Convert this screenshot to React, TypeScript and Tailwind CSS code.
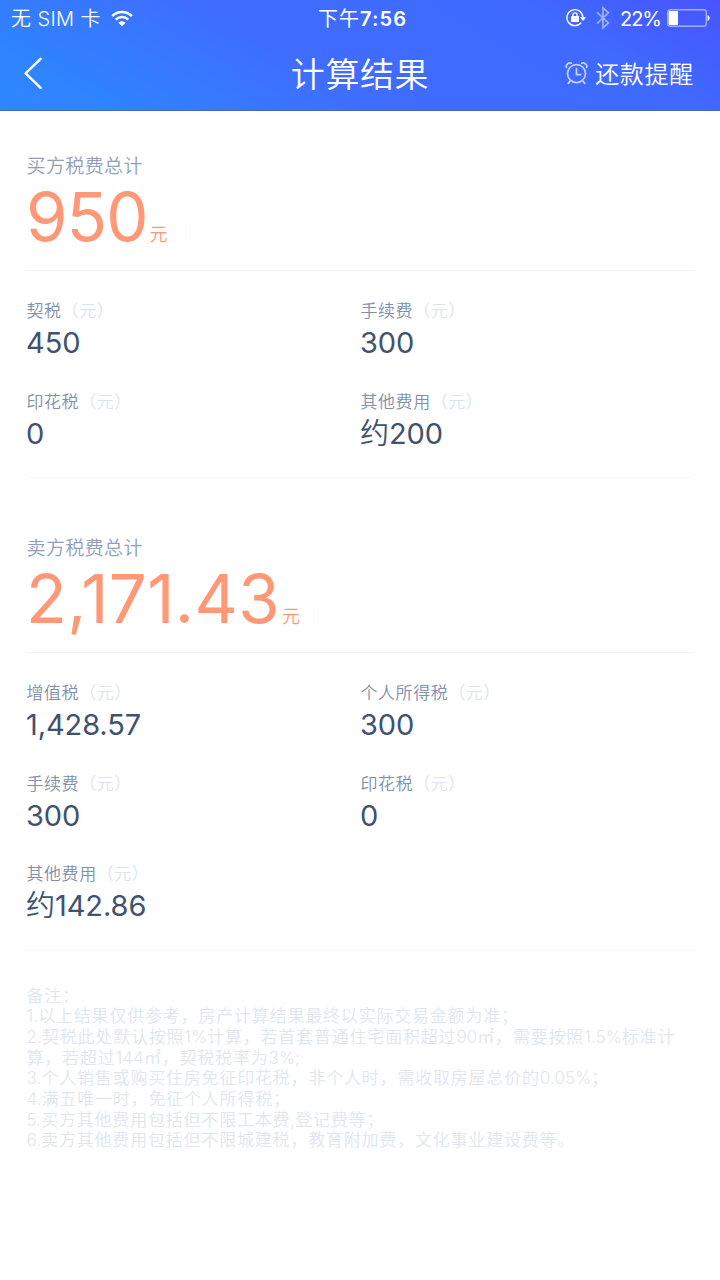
import clsx from "clsx";

type Fee = { label: string; value: string };

const buyerFees: Fee[] = [
  { label: "契税", value: "450" },
  { label: "手续费", value: "300" },
  { label: "印花税", value: "0" },
  { label: "其他费用", value: "约200" },
];

const sellerFees: Fee[] = [
  { label: "增值税", value: "1,428.57" },
  { label: "个人所得税", value: "300" },
  { label: "手续费", value: "300" },
  { label: "印花税", value: "0" },
  { label: "其他费用", value: "约142.86" },
];

const notes = [
  "备注：",
  "1.以上结果仅供参考，房产计算结果最终以实际交易金额为准；",
  "2.契税此处默认按照1%计算，若首套普通住宅面积超过90㎡，需要按照1.5%标准计",
  "算，若超过144㎡，契税税率为3%;",
  "3.个人销售或购买住房免征印花税，非个人时，需收取房屋总价的0.05%；",
  "4.满五唯一时，免征个人所得税；",
  "5.买方其他费用包括但不限工本费,登记费等；",
  "6.卖方其他费用包括但不限城建税，教育附加费，文化事业建设费等。",
];

function WifiIcon() {
  return (
    <svg className="h-[17px] w-[22px]" viewBox="0 0 22 17" fill="none" stroke="white" strokeWidth="2.5">
      <path d="M1.2 6.1C6.7.7 15.3.7 20.8 6.1" />
      <path d="M4.7 9.6c3.6-3.5 9-3.5 12.6 0" />
      <path d="M11 16.2 7.4 12.7c2-2 5.2-2 7.2 0z" fill="white" stroke="none" />
    </svg>
  );
}

function RotationLockIcon() {
  return (
    <svg className="h-5 w-5" viewBox="0 0 20 20" fill="none" stroke="white">
      <path d="M15.2 14.6A8 8 0 1 1 16.9 9.5" strokeWidth="1.4" />
      <path d="M14 9.3h6L17 12.9z" fill="white" stroke="none" />
      <rect x="5" y="8" width="8" height="6" rx=".5" fill="white" stroke="none" />
      <path d="M6.9 8.6V7a2.1 2.1 0 0 1 4.2 0v1.6" strokeWidth="1.4" />
    </svg>
  );
}

function BluetoothIcon() {
  return (
    <svg className="h-6 w-[14px]" viewBox="0 0 14 24" fill="none" stroke="white" strokeOpacity=".5" strokeWidth="1.7">
      <path d="M1 6.4 12.4 17 7 21.8V1.8l5.4 5L1 17.6" />
    </svg>
  );
}

function BatteryIcon() {
  return (
    <svg className="h-[18px] w-[43px]" viewBox="0 0 43 18" fill="none">
      <rect x=".7" y=".7" width="38.6" height="16.6" rx="2.6" stroke="white" strokeOpacity=".5" strokeWidth="1.4" />
      <path d="M1.6 3.2Q1.6 2 2.8 2H11v14H2.8q-1.2 0-1.2-1.2z" fill="white" />
      <path d="M40.6 6c2.6.8 2.6 5.2 0 6z" fill="white" />
    </svg>
  );
}

function AlarmIcon() {
  return (
    <svg className="h-6 w-6" viewBox="0 0 24 24" fill="none" stroke="white" strokeOpacity=".7" strokeWidth="1.7" strokeLinecap="round">
      <circle cx="11.5" cy="12.6" r="9" />
      <path d="M11.5 7.6v6h4.2M1.3 6.4c-.6-2.8 2.2-5.2 5-4.2M21.7 6.4c.6-2.8-2.2-5.2-5-4.2M4.9 20.4 3.3 22.4M18.1 20.4l1.6 2" />
    </svg>
  );
}

function Header() {
  return (
    <header className="h-[111px] border-b border-[#4468b8] bg-[linear-gradient(30deg,#2e87ff_0%,#2f84ff_12%,#3f6dff_42%,#3f69ff_78%,#4854ff_100%)] text-white">
      <div className="grid h-9 grid-cols-3 items-center pl-[11px] pr-[10px]">
        <div className="flex items-center gap-[10px] text-[20px]">
          <span className="pt-px font-[350] tracking-[0.4px]">无 SIM 卡</span>
          <WifiIcon />
        </div>
        <div className="pl-1 pt-px text-center text-[20px] tracking-[1.1px]">
          下午<span className="font-semibold">7:56</span>
        </div>
        <div className="flex items-center justify-end">
          <RotationLockIcon />
          <span className="ml-[10px]">
            <BluetoothIcon />
          </span>
          <span className="ml-[10px] mr-[6px] pt-px text-[20px] tracking-[-1px]">22%</span>
          <BatteryIcon />
        </div>
      </div>
      <div className="grid h-[74px] grid-cols-3 items-center pl-6 pr-[26px]">
        <svg className="h-8 w-[18px]" viewBox="0 0 18 32" fill="none" stroke="white" strokeWidth="2.4" strokeLinecap="round" strokeLinejoin="round">
          <path d="M16.6 1.8 1.6 16.3l15 14.5" />
        </svg>
        <h1 className="pl-[2px] pt-[3px] text-center text-[34px] font-[350] leading-none tracking-[0.6px]">计算结果</h1>
        <div className="flex items-center justify-end gap-[6px] text-[24px] font-[350] leading-none tracking-[0.7px]">
          <AlarmIcon />
          <span className="pt-[3px]">还款提醒</span>
        </div>
      </div>
    </header>
  );
}

/** Lighter Chinese text; the numbers inside it keep their own weight and spacing. */
function MixedText({ text, numberClass }: { text: string; numberClass: string }) {
  return text.split(/([\d.,%]+)/).map((part, i) =>
    i % 2 ? (
      <span key={i} className={numberClass}>
        {part}
      </span>
    ) : (
      part
    ),
  );
}

function FeeItem({ label, value }: Fee) {
  return (
    <div className="h-[90.5px] whitespace-nowrap font-[350]">
      <div className="h-5 pl-[0.5px] text-[17px] leading-[22px] tracking-[0.55px] text-[#8090aa]">
        {label}
        <span className="text-[#dce3f0]">（元）</span>
      </div>
      <div className="mt-[3px] h-10 text-[29px] leading-10 text-[#40526f]">
        <MixedText text={value} numberClass="font-normal tracking-[-0.1px]" />
      </div>
    </div>
  );
}

type SectionProps = { title: string; total: string; fees: Fee[]; first?: boolean };

function TaxSection({ title, total, fees, first }: SectionProps) {
  return (
    <section className={clsx("border-b border-[#f7f7f8]", first ? "pt-[46px]" : "pt-[61px]")}>
      <h2 className="h-5 pl-[0.5px] text-[19px] font-[350] leading-5 tracking-[0.4px] text-[#91a0b8]">{title}</h2>
      <div className="flex h-[94px] items-baseline border-b border-[#f3f3f4] text-[#ff9877]">
        <span className={clsx("text-[67px] leading-[79px]", first ? "tracking-[-1px]" : "tracking-[0.4px]")}>{total}</span>
        <span className="ml-[2px] text-[18px] font-[350]">元</span>
        <span className="ml-[17px] h-4 w-px bg-[#fafafa]" />
      </div>
      <div className="-mb-1 grid grid-cols-2 pt-[29px]">
        {fees.map((fee) => (
          <FeeItem key={fee.label} {...fee} />
        ))}
      </div>
    </section>
  );
}

export default function App() {
  return (
    <div className="h-[1280px] w-[720px] overflow-hidden bg-white font-['Inter','Noto_Sans_CJK_SC',sans-serif] font-normal">
      <Header />
      <main className="px-[26px]">
        <TaxSection title="买方税费总计" total="950" fees={buyerFees} first />
        <TaxSection title="卖方税费总计" total="2,171.43" fees={sellerFees} />
        <div className="whitespace-nowrap pl-[0.5px] pt-[35px] text-[17px] font-[350] leading-[20.7px] tracking-[0.8px] text-[#dfe6f0]">
          {notes.map((line) => (
            <p key={line}>
              <MixedText text={line} numberClass="tracking-[0.1px]" />
            </p>
          ))}
        </div>
      </main>
    </div>
  );
}
